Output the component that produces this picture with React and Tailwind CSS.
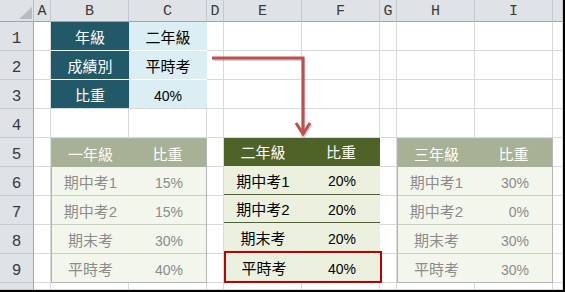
import React from 'react';

const COLS = ['A', 'B', 'C', 'D', 'E', 'F', 'G', 'H', 'I', ''];
const ROWS = ['1', '2', '3', '4', '5', '6', '7', '8', '9', ''];

const TOP = [
  ['年級', '二年級'],
  ['成績別', '平時考'],
  ['比重', '40%'],
];

const GRADE1 = [
  ['期中考1', '15%'],
  ['期中考2', '15%'],
  ['期末考', '30%'],
  ['平時考', '40%'],
];
const GRADE2 = [
  ['期中考1', '20%'],
  ['期中考2', '20%'],
  ['期末考', '20%'],
  ['平時考', '40%'],
];
const GRADE3 = [
  ['期中考1', '30%'],
  ['期中考2', '0%'],
  ['期末考', '30%'],
  ['平時考', '30%'],
];

// same track sizes for the sheet and for the layer of tables above it
const TRACKS =
  'grid grid-cols-[34px_17px_78px_78px_17px_78px_78px_17px_78px_78px_10px] grid-rows-[22px_repeat(9,29px)_7px]';

function Corner() {
  return (
    <div className="border-r border-b border-r-[#b9bfc6] border-b-[#9fa5ac] bg-[#dfe3e8] relative">
      <svg width="34" height="22" className="absolute left-0 top-0">
        <polygon points="32,7 32,19 19,19" fill="#b7bcc1" />
      </svg>
    </div>
  );
}

function FadedTable({ title, rows, className }) {
  return (
    <div className={`${className} flex flex-col border border-[#b4b4b4] bg-[#f3f6ed]`}>
      <div className="flex-1 flex bg-[#a7b195] text-white text-[15px]">
        <div className="w-[77px] flex items-center justify-center pt-[2px]">{title}</div>
        <div className="flex-1 flex items-center justify-center pt-[2px]">比重</div>
      </div>
      {rows.map(([name, pct], i) => (
        <div
          key={name}
          className={`flex-1 flex text-[#8c8c8c] ${i < rows.length - 1 ? 'border-b border-[#c9d1bb]' : ''}`}
        >
          <div className="w-[77px] flex items-center justify-center pt-[3px] text-[15px]">{name}</div>
          <div className="flex-1 flex items-center justify-end pr-[23px] pt-[3px] text-[14px]">{pct}</div>
        </div>
      ))}
    </div>
  );
}

export default function App() {
  return (
    <div className="w-[565px] h-[292px] overflow-hidden bg-white border-r-2 border-b-2 border-black font-['Liberation_Sans','Noto_Sans_CJK_TC',sans-serif] leading-none">
      <div className="relative w-[563px] h-[290px]">
        {/* the sheet: headers and empty cells */}
        <div className={`${TRACKS} w-full h-full`}>
          <Corner />
          {COLS.map((c, i) => (
            <div
              key={'h' + i}
              className="border-r border-b border-r-[#c3c8ce] border-b-[#9fa5ac] bg-[#dfe3e8] flex items-center justify-center pt-[2px] font-['Liberation_Mono',monospace] text-[15px] text-[#3a3a3a]"
            >
              {c}
            </div>
          ))}
          {ROWS.map((r) => (
            <React.Fragment key={'r' + r}>
              <div className="border-r border-b border-r-[#9fa5ac] border-b-[#c3c8ce] bg-[#dfe3e8] flex items-end justify-center pb-[3px] font-['Liberation_Mono',monospace] text-[16px] text-[#3a3a3a]">
                {r}
              </div>
              {COLS.map((c, i) => (
                <div key={r + '-' + i} className="border-r border-b border-[#d9d9d9]" />
              ))}
            </React.Fragment>
          ))}
        </div>

        {/* formatted ranges on top of the sheet */}
        <div className={`${TRACKS} absolute inset-0`}>
          <div className="col-start-3 col-end-5 row-start-2 row-end-5 flex flex-col">
            {TOP.map(([label, value], i) => (
              <div
                key={label}
                className={`flex-1 flex border-b ${i < TOP.length - 1 ? 'border-white' : 'border-[#d9d9d9]'}`}
              >
                <div className="w-[78px] bg-[#215968] text-white text-[15px] flex items-center justify-center pt-[3px]">
                  {label}
                </div>
                <div
                  className={`flex-1 bg-[#daeef3] text-black flex items-center justify-center pt-[3px] ${
                    value.endsWith('%') ? 'text-[14px]' : 'text-[15px]'
                  }`}
                >
                  {value}
                </div>
              </div>
            ))}
          </div>

          <FadedTable title="一年級" rows={GRADE1} className="col-start-3 col-end-5 row-start-6 row-end-11" />

          <div className="col-start-6 col-end-8 row-start-6 row-end-11 flex flex-col bg-[#ebf1de]">
            <div className="flex-1 flex bg-[#4f6228] text-white text-[15px]">
              <div className="w-[78px] flex items-center justify-center pt-[2px]">二年級</div>
              <div className="flex-1 flex items-center justify-center pt-[2px]">比重</div>
            </div>
            {GRADE2.map(([name, pct], i) => (
              <div
                key={name}
                className={`flex-1 flex text-black ${
                  i === 3 ? 'border-2 border-[#c00000] mr-[-2px]' : i < 2 ? 'border-b border-[#4f6228]' : ''
                }`}
              >
                <div className={`${i === 3 ? 'w-[76px]' : 'w-[78px]'} flex items-center justify-center pt-[3px] text-[15px]`}>
                  {name}
                </div>
                <div className="flex-1 flex items-center justify-end pr-[24px] pt-[3px] text-[14px]">{pct}</div>
              </div>
            ))}
          </div>

          <FadedTable title="三年級" rows={GRADE3} className="col-start-9 col-end-11 row-start-6 row-end-11" />
        </div>

        {/* arrow from the lookup value down to the matched table */}
        <svg className="absolute left-0 top-0 pointer-events-none" width="563" height="290">
          <g fill="none" stroke="#000" strokeOpacity="0.18" strokeWidth="3" transform="translate(1,1.5)">
            <polyline points="212,58 303,58 303,133" />
            <polyline points="296,123 303,134 310,123" />
          </g>
          <g fill="none" stroke="#c0504d" strokeWidth="3" strokeLinejoin="miter">
            <polyline points="212,58 303,58 303,133" />
            <polyline points="296,123 303,134 310,123" />
          </g>
        </svg>
      </div>
    </div>
  );
}
